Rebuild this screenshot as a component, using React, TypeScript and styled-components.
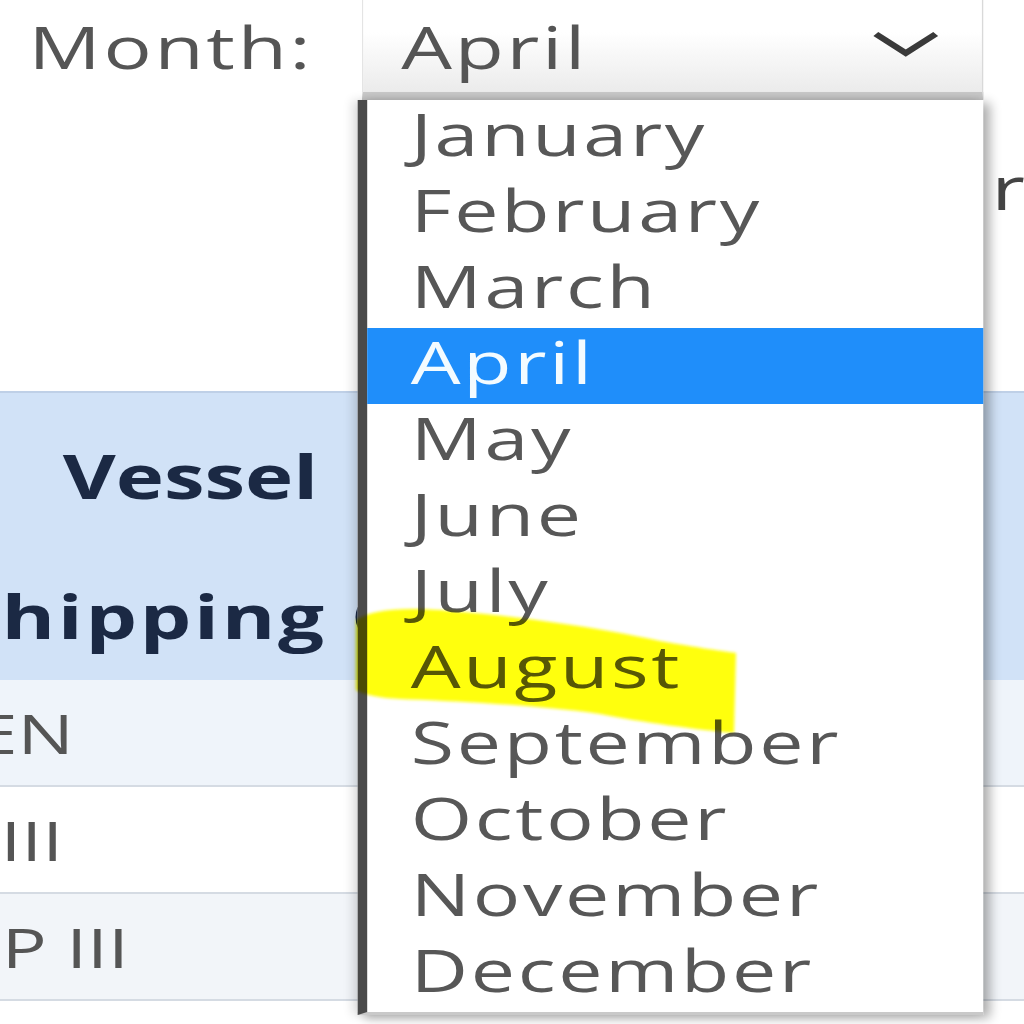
import React from 'react';
import styled, { createGlobalStyle } from 'styled-components';

// the screenshot is stretched sideways, so the page is laid out narrow and widened
const SX = 1.36;

const months = [
  'January', 'February', 'March', 'April', 'May', 'June',
  'July', 'August', 'September', 'October', 'November', 'December',
];

const vessels = [
  { name: 'MAERSK LINDEN', eta: '12', tone: 'a' },
  { name: 'MAERSK STAR III', eta: '18', tone: 'b' },
  { name: 'MAERSK SLOOP III', eta: '24', tone: 'c' },
];

const GlobalStyle = createGlobalStyle`
  html, body {
    margin: 0;
    padding: 0;
    background: #fff;
  }
  body {
    font-family: "Open Sans", "Liberation Sans", sans-serif;
    overflow: hidden;
  }
`;

const Page = styled.div`
  position: relative;
  width: 1024px;
  height: 1024px;
  overflow: hidden;
  background: #fff;
`;

const Stretch = styled.div`
  width: ${1024 / SX}px;
  transform: scaleX(${SX});
  transform-origin: 0 0;
`;

const FilterRow = styled.div`
  display: grid;
  grid-template-columns: 266px 457px 1fr;
  height: 100px;
`;

const Label = styled.div`
  padding-left: 21px;
  font-size: 59px;
  line-height: 92px;
  letter-spacing: 2px;
  color: #555;
  white-space: nowrap;
`;

const SelectBox = styled.div`
  position: relative;
  box-sizing: border-box;
  height: 100px;
  display: flex;
  align-items: flex-start;
  justify-content: space-between;
  padding: 0 31px 0 28px;
  background: linear-gradient(#ffffff 35%, #ebebeb);
  border-left: 1px solid #e4e4e4;
  border-right: 1px solid #d9d9d9;
  border-bottom: 8px solid #c8c8c8;
`;

const SelectValue = styled.span`
  font-size: 59px;
  line-height: 92px;
  letter-spacing: 2px;
  color: #555;
`;

const Chevron = styled.svg`
  margin-top: 30px;
  flex: none;
`;

const Dropdown = styled.ul`
  position: absolute;
  top: calc(100% + 8px);
  left: -4px;
  right: -1px;
  margin: 0;
  padding: 0;
  list-style: none;
  background: #fff;
  border-left: 7px solid #4a4a4a;
  border-bottom: 3px solid #c9c9c9;
  box-shadow: 5px 3px 9px rgba(0, 0, 0, 0.32), -4px 0 8px rgba(0, 0, 0, 0.12);
  z-index: 2;
`;

const Option = styled.li<{ $selected?: boolean }>`
  box-sizing: border-box;
  height: 76px;
  padding: 0 0 8px 32px;
  font-size: 58px;
  line-height: 68px;
  letter-spacing: 2px;
  white-space: nowrap;
  color: ${(p) => (p.$selected ? '#f3fbff' : '#575757')};
  background: ${(p) => (p.$selected ? '#1f8efa' : 'transparent')};
`;

const SecondRow = styled.div`
  display: grid;
  grid-template-columns: 266px 457px 1fr;
  height: 291px;
`;

const SideText = styled.div`
  grid-column: 3;
  padding: 49px 0 0 6px;
  font-size: 60px;
  line-height: 76px;
  color: #444;
  white-space: nowrap;
  overflow: hidden;
`;

const Table = styled.div`
  margin-left: -382px;
  width: 1400px;
`;

const HeadRow = styled.div`
  display: grid;
  grid-template-columns: 628px 772px;
  grid-template-rows: 140px 140px;
  box-sizing: border-box;
  height: 289px;
  padding-top: 13px;
  background: #d1e2f7;
  border-top: 2px solid #bfd0e7;
`;

const HeadCell = styled.div<{ $align: 'left' | 'right' | 'center'; $span?: boolean; $pad?: number; $wide?: boolean }>`
  grid-column: ${(p) => (p.$span ? '1 / span 2' : 'auto')};
  padding: ${(p) =>
    p.$align === 'left' ? `0 0 0 ${p.$pad ?? 0}px` : p.$align === 'right' ? `0 ${p.$pad ?? 0}px 0 0` : '0'};
  text-align: ${(p) => p.$align};
  font-size: 60px;
  font-weight: 700;
  line-height: 140px;
  letter-spacing: ${(p) => (p.$wide ? 2 : 0)}px;
  color: #1b2944;
  white-space: nowrap;
  overflow: hidden;
`;

const BodyRow = styled.div<{ $tone: string }>`
  display: grid;
  grid-template-columns: 628px 772px;
  box-sizing: border-box;
  height: 107px;
  border-bottom: 2px solid #d5dbe3;
  background: ${(p) => (p.$tone === 'a' ? '#eff4fa' : p.$tone === 'c' ? '#f2f5f9' : '#ffffff')};
`;

const BodyCell = styled.div<{ $center?: boolean }>`
  padding-left: ${(p) => (p.$center ? 0 : 12)}px;
  text-align: ${(p) => (p.$center ? 'center' : 'left')};
  font-size: 55px;
  line-height: 105px;
  color: #555;
  white-space: nowrap;
`;

const Marker = styled.svg`
  position: absolute;
  left: 0;
  top: 0;
  pointer-events: none;
  mix-blend-mode: multiply;
  z-index: 5;
`;

export default function App() {
  return (
    <Page>
      <GlobalStyle />
      <Stretch>
        <FilterRow>
          <Label>Month:</Label>
          <SelectBox>
            <SelectValue>April</SelectValue>
            <Chevron width="50" height="28" viewBox="0 0 50 28">
              <polyline points="3,4 25,23 47,4" fill="none" stroke="#3a3a3a" strokeWidth="5.5" />
            </Chevron>
            <Dropdown>
              {months.map((m) => (
                <Option key={m} $selected={m === 'April'}>
                  {m}
                </Option>
              ))}
            </Dropdown>
          </SelectBox>
        </FilterRow>
        <SecondRow>
          <SideText>rn</SideText>
        </SecondRow>
        <Table>
          <HeadRow>
            <HeadCell $align="right" $pad={12}>Vessel</HeadCell>
            <HeadCell $align="center">ETA</HeadCell>
            <HeadCell $align="left" $span $wide $pad={348}>Shipping Company</HeadCell>
          </HeadRow>
          {vessels.map((v) => (
            <BodyRow key={v.name} $tone={v.tone}>
              <BodyCell>{v.name}</BodyCell>
              <BodyCell $center>{v.eta}</BodyCell>
            </BodyRow>
          ))}
        </Table>
      </Stretch>
      <Marker width="1024" height="1024" viewBox="0 0 1024 1024">
        <defs>
          <filter id="soft" x="-5%" y="-20%" width="110%" height="140%">
            <feGaussianBlur stdDeviation="1.5" />
          </filter>
        </defs>
        <path
          d="M356 620 C370 610 400 607 440 610 C520 616 600 628 660 641 C700 648 722 651 736 653 L734 733 C700 730 640 722 600 714 C540 705 450 701 400 699 C380 698 364 695 356 690 Z"
          fill="#ffff10"
          filter="url(#soft)"
        />
      </Marker>
    </Page>
  );
}
